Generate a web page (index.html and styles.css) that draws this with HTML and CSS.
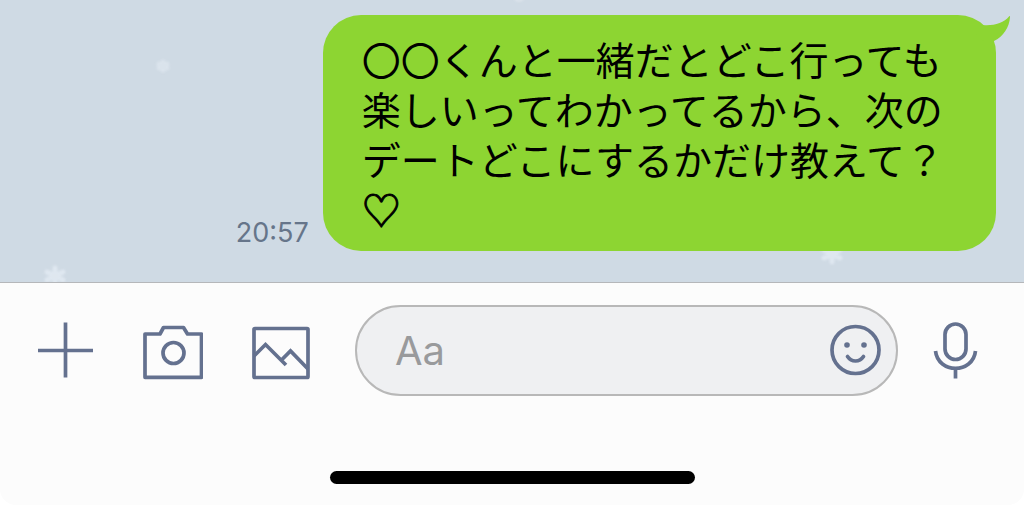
FILE: index.html
```html
<!DOCTYPE html>
<html lang="ja">
<head>
  <meta charset="UTF-8" />
  <meta name="viewport" content="width=device-width, initial-scale=1" />
  <title>トーク</title>

  <link rel="stylesheet" href="styles.css">
</head>

<body>
  <!-- ===== CHAT AREA ===== -->
  <main class="chat">
    <!-- wallpaper snow -->
    <svg class="snow snow-top" viewBox="0 0 24 24" aria-hidden="true">
      <circle cx="12" cy="12" r="6" />
    </svg>
    <svg class="snow snow-small" viewBox="0 0 24 24" aria-hidden="true">
      <path d="M12 8v8M8 10l8 4M8 14l8-4" />
    </svg>
    <svg class="snow snow-left" viewBox="0 0 24 24" aria-hidden="true">
      <path d="M12 4v16M4 8l16 8M4 16l16-8" />
    </svg>
    <svg class="snow snow-right" viewBox="0 0 24 24" aria-hidden="true">
      <path d="M12 4v16M4 8l16 8M4 16l16-8" />
    </svg>

    <div class="message">
      <time class="message-time" datetime="20:57">20:57</time>
      <div class="bubble">
        <svg class="bubble-tail" viewBox="0 0 40 32" aria-hidden="true">
          <path d="M11 10C21 11 32 8 37 1.500C37.600 .8 38 1 38 2C37.500 12 31 22 22 26L16 30L4 20Z" />
        </svg>
        <p class="bubble-text">〇〇くんと一緒だとどこ行っても<br>楽しいってわかってるから、次の<br>デートどこにするかだけ教えて？<br><span class="heart">♡</span></p>
      </div>
    </div>
  </main>

  <!-- ===== INPUT BAR ===== -->
  <footer class="panel">
    <form class="composer">
      <div class="tools">
        <button type="button" class="icon-button" aria-label="追加">
          <svg class="icon" viewBox="0 1 60 60">
            <path d="M30.500 2.500v55M3 30.500h55" />
          </svg>
        </button>
        <button type="button" class="icon-button" aria-label="カメラ">
          <svg class="icon" viewBox="0 1 60 60">
            <path stroke-linejoin="round" d="M2 14H17L20.500 7.500H40.500L44.500 14H58.500V57.300H2Z" />
            <circle cx="30.500" cy="33" r="10.500" />
          </svg>
        </button>
        <button type="button" class="icon-button" aria-label="写真">
          <svg class="icon" viewBox="0 1 60 60">
            <rect x="3" y="8.500" width="54" height="49" rx="1" />
            <path d="M3 36L14.500 24.500L35 45M30 40.500L39.500 31L57 49" />
          </svg>
        </button>
      </div>

      <div class="field">
        <input type="text" class="field-input" placeholder="Aa" aria-label="メッセージ">
        <button type="button" class="icon-button" aria-label="スタンプ">
          <svg class="icon" viewBox="0 1 60 60">
            <circle cx="29.500" cy="30" r="23.500" />
            <circle class="dot" cx="21" cy="25" r="2.800" />
            <circle class="dot" cx="38" cy="25" r="2.800" />
            <path stroke-linecap="round" d="M21.500 36.500C25.500 42.500 33.500 42.500 37.500 36.500" />
          </svg>
        </button>
      </div>

      <button type="button" class="icon-button" aria-label="音声">
        <svg class="icon" viewBox="0 1 60 60">
          <rect x="19" y="4" width="21" height="35.500" rx="10.500" />
          <path d="M9.500 31C12 54 47 54 49.500 31M29.500 48v10.500" />
        </svg>
      </button>
    </form>

    <div class="home-indicator"></div>
  </footer>
</body>
</html>
```
FILE: styles.css
```css
/* === PALETTE VARIABLES === */
:root {
  --color-chat: #cfdae4;
  --color-bubble: #8dd532;
  --color-panel: #fcfcfc;
  --color-field: #eff0f2;
  --color-line: #b5b7ba;
  --color-icon: #64718f;
  --color-time: #66758a;
}

/* 1) Reset + base */
* {
  margin: 0;
  padding: 0;
  box-sizing: border-box;
}
body {
  background-color: #fff;
  font-family: Inter, "Noto Sans CJK JP", sans-serif;
  display: flex;
  flex-direction: column;
  min-height: 100vh;
}

/* 2) Chat area */
.chat {
  position: relative;
  background-color: var(--color-chat);
  padding: 15px 28px 31px;
  overflow: hidden;
}
.message {
  position: relative;
  display: flex;
  justify-content: flex-end;
  align-items: flex-end;
  gap: 14px;
}
.message-time {
  color: var(--color-time);
  font-size: 27px;
  line-height: 36px;
}

/* 3) Bubble */
.bubble {
  position: relative;
  background-color: var(--color-bubble);
  border-radius: 38px;
  padding: 18px 52px 18px 39px;
}
.bubble-text {
  color: #000;
  font-family: "Noto Sans CJK JP", sans-serif;
  font-size: 39px;
  line-height: 50px;
}
.heart {
  -webkit-text-stroke: 1px #000;
}
.bubble-tail {
  position: absolute;
  top: 0;
  right: -16px;
  width: 40px;
  height: 32px;
  fill: var(--color-bubble);
}

/* 4) Wallpaper snow */
.snow {
  position: absolute;
  width: 24px;
  height: 24px;
  fill: none;
  stroke: #e6edf5;
  stroke-width: 5;
  stroke-linecap: round;
  filter: blur(1px);
  opacity: 0.7;
}
.snow-top {
  top: -16px;
  left: 507px;
  fill: #dee5ed;
  stroke: none;
}
.snow-small {
  top: 54px;
  left: 151px;
  opacity: 0.5;
}
.snow-left {
  top: 264px;
  left: 43px;
}
.snow-right {
  top: 242px;
  left: 820px;
}

/* 5) Bottom panel */
.panel {
  flex: 1;
  background-color: var(--color-panel);
  border-top: 1px solid var(--color-line);
  border-radius: 0 0 16px 16px;
  padding: 22px 0 21px;
  display: flex;
  flex-direction: column;
  justify-content: space-between;
}
.composer {
  display: flex;
  align-items: center;
  padding: 0 38px 0 35px;
}
.tools {
  display: flex;
  gap: 48px;
  margin-right: 44px;
}

/* 6) Icons */
.icon-button {
  flex: none;
  width: 60px;
  height: 60px;
  background: none;
  border: none;
  cursor: pointer;
}
.icon {
  display: block;
  width: 60px;
  height: 60px;
  fill: none;
  stroke: var(--color-icon);
  stroke-width: 3.7;
}
.icon .dot {
  fill: var(--color-icon);
  stroke: none;
}

/* 7) Text field */
.field {
  flex: 1;
  min-width: 0;
  height: 91px;
  display: flex;
  align-items: center;
  background-color: var(--color-field);
  border: 2px solid #b8b8b8;
  border-radius: 46px;
  padding: 0 10px 0 38px;
  margin-right: 28px;
}
.field-input {
  flex: 1;
  min-width: 0;
  background: none;
  border: none;
  outline: none;
  color: #222;
  font-family: Inter, "Noto Sans CJK JP", sans-serif;
  font-size: 40px;
  line-height: 50px;
}
.field-input::placeholder {
  color: #999a9c;
}

/* 8) Home indicator */
.home-indicator {
  align-self: center;
  width: 100%;
  max-width: 365px;
  height: 13px;
  background-color: #000;
  border-radius: 7px;
}
```
